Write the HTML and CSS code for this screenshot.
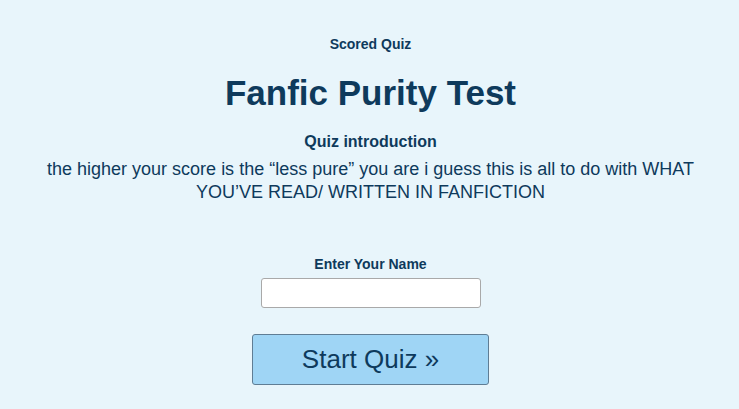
FILE: index.html
```html
<!DOCTYPE html>
<html lang="en">
<head>
    <meta charset="UTF-8">
    <meta name="viewport" content="width=device-width, initial-scale=1.0">
    <title>Fanfic Purity Test</title>
    <link rel="stylesheet" href="styles.css">
</head>
<body>
    <div class="quiz">
        <div class="kind">Scored Quiz</div>
        <h1 class="title">Fanfic Purity Test</h1>
        <h2 class="intro-head">Quiz introduction</h2>
        <p class="intro">the higher your score is the &ldquo;less pure&rdquo; you are i guess this is all to do with WHAT YOU&rsquo;VE READ/ WRITTEN IN FANFICTION</p>
        <div class="name-box">
            <label class="name-label" for="name">Enter Your Name</label>
            <input class="name-input" type="text" id="name">
        </div>
        <button class="start">Start Quiz &raquo;</button>
    </div>
</body>
</html>
```

FILE: styles.css
```css
body{
    margin: 0;
    background-color: #e8f5fb;
    font-family: "Liberation Sans", Arial, sans-serif;
    color: #0e3a5c;
}
.quiz{
    display: flex;
    flex-direction: column;
    align-items: center;
    text-align: center;
    padding: 36px 40px 0 42px;
}
.kind{
    font-size: 14px;
    font-weight: bold;
    line-height: 16px;
}
.title{
    margin: 19px 0 0;
    font-size: 35px;
    line-height: 44px;
}
.intro-head{
    margin: 17px 0 0;
    font-size: 16px;
    line-height: 20px;
}
.intro{
    margin: 6px 0 0;
    font-size: 18px;
    line-height: 23px;
}
.name-box{
    display: flex;
    flex-direction: column;
    align-items: center;
    margin-top: 52px;
}
.name-label{
    font-size: 14px;
    font-weight: bold;
    line-height: 16px;
}
.name-input{
    box-sizing: border-box;
    width: 220px;
    height: 30px;
    margin-top: 6px;
    border: 1px solid #a9a9a9;
    border-radius: 3px;
    background: #fff;
}
.start{
    box-sizing: border-box;
    width: 237px;
    height: 51px;
    margin-top: 26px;
    border: 1px solid #5f7d94;
    border-radius: 3px;
    background-color: #9fd5f5;
    color: #0e3a5c;
    font-family: "Liberation Sans", Arial, sans-serif;
    font-size: 26px;
    cursor: pointer;
}
```
